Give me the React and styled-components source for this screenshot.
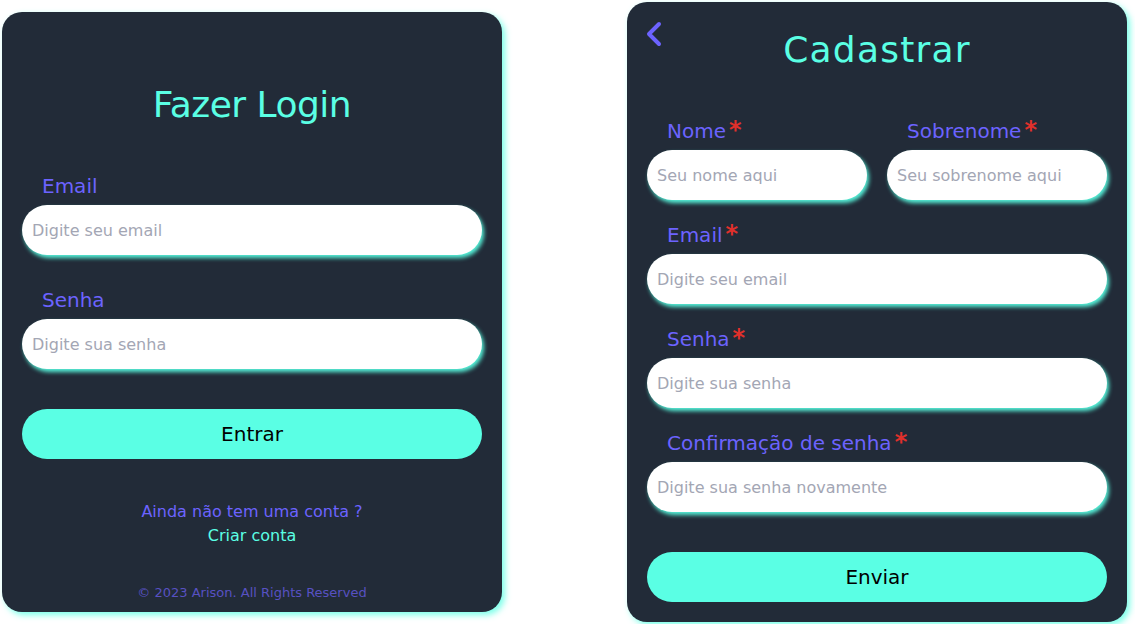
import styled, { createGlobalStyle } from 'styled-components'

const GlobalStyle = createGlobalStyle`
  * {
    box-sizing: border-box;
  }
  body {
    margin: 0;
    background: #ffffff;
    font-family: 'DejaVu Sans', 'Open Sans', sans-serif;
  }
`

const Page = styled.div`
  display: flex;
  align-items: center;
  gap: 125px;
  height: 624px;
  padding-left: 2px;
`

const Card = styled.form`
  position: relative;
  display: flex;
  flex-direction: column;
  width: 500px;
  height: ${({ $height }) => $height};
  padding: ${({ $padding }) => $padding};
  background: #222b38;
  border-radius: 20px;
  box-shadow: 3px 3px 6px rgba(90, 255, 228, 0.8);
`

const Title = styled.h1`
  margin: 0;
  height: 48px;
  line-height: 48px;
  text-align: center;
  font-size: 36px;
  font-weight: 400;
  color: #5affe4;
  letter-spacing: ${({ $spacing }) => $spacing};
`

const BackButton = styled.button`
  position: absolute;
  top: 18px;
  left: 18px;
  display: flex;
  padding: 0;
  background: none;
  border: none;
  cursor: pointer;
`

const Fields = styled.div`
  display: flex;
  flex-direction: column;
  gap: ${({ $gap }) => $gap};
  margin-top: 45px;
`

const Row = styled.div`
  display: grid;
  grid-template-columns: 1fr 1fr;
  gap: 20px;
`

const Field = styled.label`
  display: flex;
  flex-direction: column;
  gap: 7px;
`

const LabelText = styled.span`
  display: flex;
  align-items: flex-start;
  height: 24px;
  padding-left: 20px;
  line-height: 24px;
  font-size: 20px;
  color: #6c63ff;
`

const Required = styled.span`
  margin-left: 3px;
  font-size: 24px;
  font-weight: 700;
  line-height: 22px;
  color: #e0302b;
`

const Input = styled.input`
  width: 100%;
  height: 50px;
  padding: 0 10px;
  border: none;
  border-radius: 25px;
  outline: none;
  background: #ffffff;
  box-shadow: 2px 3px 4px rgba(90, 255, 228, 0.95);
  font-family: inherit;
  font-size: 16px;
  color: #222b38;

  &::placeholder {
    color: #a3a6b4;
  }
`

const SubmitButton = styled.button`
  width: 100%;
  height: 50px;
  margin-top: 40px;
  border: none;
  border-radius: 25px;
  background: #5affe4;
  font-family: inherit;
  font-size: 20px;
  color: #000000;
  cursor: pointer;
`

const SignupPrompt = styled.div`
  display: flex;
  flex-direction: column;
  align-items: center;
  margin-top: 41px;
  font-size: 16px;
  line-height: 24px;
`

const PromptText = styled.span`
  color: #6c63ff;
`

const PromptLink = styled.a`
  color: #5affe4;
  text-decoration: none;
  cursor: pointer;
`

const Footer = styled.footer`
  margin-top: auto;
  text-align: center;
  font-size: 13px;
  line-height: 20px;
  color: #5851c2;
`

const ChevronLeft = () => (
  <svg width='18' height='28' viewBox='0 0 18 28' fill='none'>
    <polyline points='14,4 4,14 14,24' stroke='#6c63ff' strokeWidth='4' strokeLinecap='round' strokeLinejoin='round' />
  </svg>
)

const FormField = ({ label, placeholder, required, type = 'text' }) => (
  <Field>
    <LabelText>
      {label}
      {required && <Required>*</Required>}
    </LabelText>
    <Input placeholder={placeholder} type={type} />
  </Field>
)

const LoginCard = () => (
  <Card $height='600px' $padding='69px 20px 9px'>
    <Title $spacing='-0.5px'>Fazer Login</Title>
    <Fields $gap='33px'>
      <FormField label='Email' placeholder='Digite seu email' type='email' />
      <FormField label='Senha' placeholder='Digite sua senha' type='password' />
    </Fields>
    <SubmitButton type='button'>Entrar</SubmitButton>
    <SignupPrompt>
      <PromptText>Ainda não tem uma conta ?</PromptText>
      <PromptLink>Criar conta</PromptLink>
    </SignupPrompt>
    <Footer>© 2023 Arison. All Rights Reserved</Footer>
  </Card>
)

const SignupCard = () => (
  <Card $height='620px' $padding='24px 20px 20px'>
    <BackButton type='button' aria-label='Voltar'>
      <ChevronLeft />
    </BackButton>
    <Title $spacing='1.2px'>Cadastrar</Title>
    <Fields $gap='23px'>
      <Row>
        <FormField label='Nome' placeholder='Seu nome aqui' required />
        <FormField label='Sobrenome' placeholder='Seu sobrenome aqui' required />
      </Row>
      <FormField label='Email' placeholder='Digite seu email' required type='email' />
      <FormField label='Senha' placeholder='Digite sua senha' required type='password' />
      <FormField label='Confirmação de senha' placeholder='Digite sua senha novamente' required type='password' />
    </Fields>
    <SubmitButton type='button'>Enviar</SubmitButton>
  </Card>
)

const App = () => (
  <>
    <GlobalStyle />
    <Page>
      <LoginCard />
      <SignupCard />
    </Page>
  </>
)

export default App
